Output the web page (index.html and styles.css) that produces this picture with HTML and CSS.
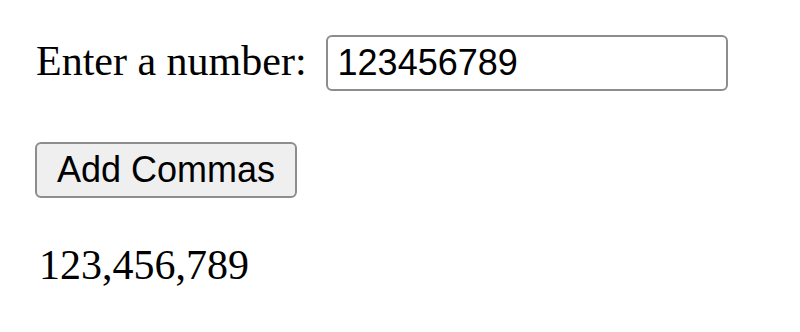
FILE: index.html
```html
<!DOCTYPE html>
<html lang="en">

<head>
    <meta charset="UTF-8">
    <meta name="viewport" content="width=device-width, initial-scale=1.0">
    <title>Add Commas</title>
    <link rel="stylesheet" href="styles.css">
</head>

<body>
    <div class="page">
        <div class="field">
            <label for="num" class="label">Enter a number:</label>
            <input type="text" id="num" class="num" value="123456789">
        </div>

        <button class="btn" id="addBtn">Add Commas</button>

        <p class="result" id="result">123,456,789</p>
    </div>
    <script>
        var oNum = document.querySelector('#num');
        var oBtn = document.querySelector('#addBtn');
        var oResult = document.querySelector('#result');

        //给数字加逗号
        oBtn.onclick = function () {
            var val = oNum.value.replace(/,/g, '');
            oResult.innerHTML = val.replace(/\B(?=(\d{3})+(?!\d))/g, ',');
        }
    </script>
</body>

</html>
```

FILE: styles.css
```css
* {
    margin: 0;
    padding: 0;
    box-sizing: border-box;
}

body {
    background-color: #fff;
    color: #000;
    font-family: "Liberation Serif", "Times New Roman", serif;
}

.page {
    padding: 35px 0 0 35px;
}

.field {
    display: flex;
    align-items: baseline;
    gap: 19px;
}

.label {
    font-size: 42px;
    padding-left: 1px;
}

.num {
    width: 402px;
    height: 56px;
    padding: 0 10px;
    border: 2px solid #8d8d8d;
    border-radius: 6px;
    background-color: #fff;
    font-family: "Liberation Sans", Arial, sans-serif;
    font-size: 36px;
    color: #000;
    outline: none;
}

.btn {
    display: block;
    width: 262px;
    height: 56px;
    margin-top: 51px;
    border: 2px solid #8d8d8d;
    border-radius: 6px;
    background-color: #efefef;
    font-family: "Liberation Sans", Arial, sans-serif;
    font-size: 36px;
    color: #000;
}

.result {
    margin-top: 43px;
    padding-left: 4px;
    font-size: 42px;
    line-height: 48px;
}
```
